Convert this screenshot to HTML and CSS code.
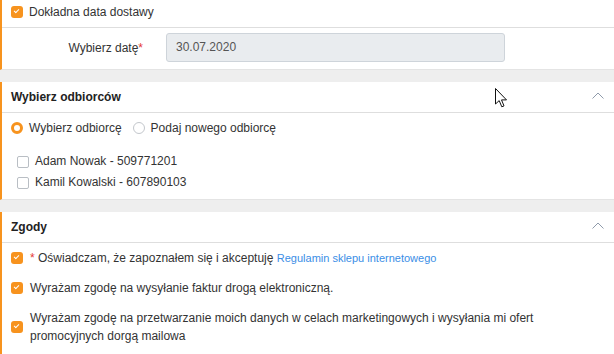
FILE: index.html
```html
<!DOCTYPE html>
<html lang="pl">
<head>
    <meta charset="UTF-8">
    <meta name="viewport" content="width=device-width, initial-scale=1.0">
    <title>Zamówienie</title>
    <link rel="stylesheet" href="styles.css">
</head>
<body>

    <div class="page">

        <section class="panel">
            <label class="check-row">
                <span class="box checked"></span>
                <span>Dokładna data dostawy</span>
            </label>
            <div class="date-row">
                <div class="date-label">Wybierz datę<span class="req">*</span></div>
                <div class="date-input">30.07.2020</div>
            </div>
        </section>

        <section class="panel">
            <div class="panel-head">
                <span>Wybierz odbiorców</span>
                <svg class="chevron" width="12" height="7" viewBox="0 0 12 7"><path d="M0.5 6.5 L6 1 L11.5 6.5" fill="none" stroke="#8f9bab" stroke-width="1"/></svg>
            </div>
            <div class="radio-row">
                <label class="radio-opt"><span class="radio on"></span>Wybierz odbiorcę</label>
                <label class="radio-opt"><span class="radio"></span>Podaj nowego odbiorcę</label>
            </div>
            <div class="recipients">
                <label class="recipient"><span class="box"></span>Adam Nowak - 509771201</label>
                <label class="recipient"><span class="box"></span>Kamil Kowalski - 607890103</label>
            </div>
        </section>

        <section class="panel last">
            <div class="panel-head">
                <span>Zgody</span>
                <svg class="chevron" width="12" height="7" viewBox="0 0 12 7"><path d="M0.5 6.5 L6 1 L11.5 6.5" fill="none" stroke="#8f9bab" stroke-width="1"/></svg>
            </div>
            <label class="consent">
                <span class="box checked"></span>
                <span><span class="req">*</span> Oświadczam, że zapoznałem się i akceptuję <a class="link" href="#">Regulamin sklepu internetowego</a></span>
            </label>
            <label class="consent">
                <span class="box checked"></span>
                <span>Wyrażam zgodę na wysyłanie faktur drogą elektroniczną.</span>
            </label>
            <label class="consent">
                <span class="box checked"></span>
                <span>Wyrażam zgodę na przetwarzanie moich danych w celach marketingowych i wysyłania mi ofert promocyjnych dorgą mailowa</span>
            </label>
        </section>

    </div>

    <!-- mouse pointer caught in the screenshot -->
    <svg class="cursor" width="13" height="20" viewBox="0 0 13 20">
        <path d="M0.5 0.5 L0.5 16 L4.2 12.6 L6.8 18.8 L9 17.9 L6.5 11.9 L11.5 11.9 Z" fill="#fff" stroke="#111" stroke-width="1" stroke-linejoin="round"/>
    </svg>

</body>
</html>
```

FILE: styles.css
```css
:root{
    --colbg: #eeeeee;
    --colwhite: #fff;
    --colorange: #f7931e;
    --coltext: #333;
    --colline: #dedede;
    --colred: #e53935;
    --collink: #3a8ee6;
}
body{
    margin: 0;
    background: var(--colbg);
    color: var(--coltext);

    font-family: "Liberation Sans", Arial, sans-serif;
    font-size: 12px;
}
.page{
    width: 614px;
}
.panel{
    background: var(--colwhite);
    border-left: 2px solid var(--colorange);
    border-bottom: 1px solid #e4e4e4;
    margin-bottom: 12px;
}
.panel.last{
    margin-bottom: 0;
    padding-bottom: 4px;
}

/* checkboxes and radios */
.box{
    flex: none;
    width: 10px;
    height: 10px;
    border: 1px solid #b9bec4;
    border-radius: 2px;
    background: var(--colwhite);
    position: relative;
}
.box.checked{
    width: 12px;
    height: 12px;
    border: none;
    border-radius: 3px;
    background: var(--colorange);
}
.box.checked::after{
    content: "";
    position: absolute;
    left: 3px;
    top: 3px;
    width: 4px;
    height: 2px;
    border-left: 1.5px solid var(--colwhite);
    border-bottom: 1.5px solid var(--colwhite);
    transform: rotate(-45deg);
}
.radio{
    flex: none;
    width: 10px;
    height: 10px;
    border: 1px solid #c3c7cc;
    border-radius: 50%;
    margin-right: 6px;
}
.radio.on{
    border: 3px solid var(--colorange);
    width: 6px;
    height: 6px;
}

/* first panel */
.check-row{
    display: flex;
    align-items: center;
    gap: 6px;
    padding: 3px 9px 6px;
    line-height: 18px;
    border-bottom: 1px solid var(--colline);
}
.date-row{
    display: flex;
    align-items: center;
    gap: 23px;
    padding: 5px 0 7px;
}
.date-label{
    width: 141px;
    text-align: right;
}
.req{
    color: var(--colred);
}
.date-input{
    width: 319px;
    padding: 4px 9px;
    line-height: 19px;
    background: #e9ecef;
    border: 1px solid #ced4da;
    border-radius: 3px;
    color: #555;
}

/* panel headers */
.panel-head{
    display: flex;
    justify-content: space-between;
    align-items: center;
    padding: 8px 10px 8px 9px;
    line-height: 14px;
    font-weight: bold;
    color: #222;
    border-bottom: 1px solid var(--colline);
}
.chevron{
    margin-top: -4px;
}

/* recipients */
.radio-row{
    display: flex;
    gap: 11px;
    padding: 6px 9px;
    line-height: 18px;
}
.radio-opt{
    display: flex;
    align-items: center;
}
.recipients{
    padding: 8px 15px 6px;
}
.recipient{
    display: flex;
    align-items: center;
    gap: 6px;
    line-height: 21px;
}

/* consents */
.consent{
    display: flex;
    align-items: center;
    gap: 7px;
    padding: 6px 9px;
    line-height: 18px;
}
.link{
    color: var(--collink);
    font-size: 11px;
    text-decoration: none;
}

.cursor{
    position: absolute;
    left: 495px;
    top: 88px;
}
```
